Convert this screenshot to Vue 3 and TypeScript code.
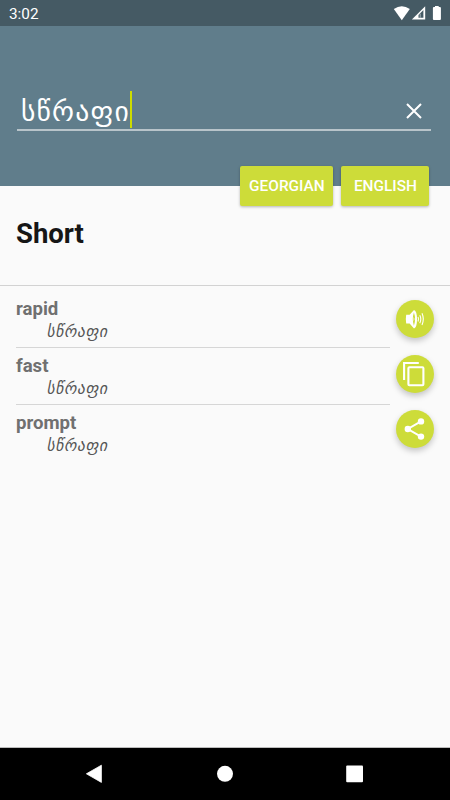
<script setup lang="ts">
import { ref } from 'vue'

interface Entry {
  word: string
  source: string
}

const query = ref('სწრაფი')
const languages: string[] = ['GEORGIAN', 'ENGLISH']
const entries: Entry[] = [
  { word: 'rapid', source: 'სწრაფი' },
  { word: 'fast', source: 'სწრაფი' },
  { word: 'prompt', source: 'სწრაფი' },
]
</script>

<template>
  <div class="screen">
    <div class="status">
      <span class="clock">3:02</span>
      <svg class="status-icons" width="50" height="18" viewBox="0 0 50 18">
        <path d="M.8 4.1Q8.8-1.4 16.8 4.1L8.8 15.3Z" fill="#fff" />
        <path d="M32.2 1.3V14.6H18.9Z" fill="#fff" />
        <path d="M25.5 9.9L30.4 5V12.8H25.5Z" fill="#455a64" />
        <path d="M27.2 8.7V12.9" stroke="#a9b4b9" stroke-width="1" />
        <path d="M42 .9h3.7v1.2h1.2q1 0 1 1v10.8q0 1-1 1h-6q-1 0-1-1v-10.8q0-1 1-1H42z" fill="#fff" />
      </svg>
    </div>

    <header class="header">
      <div class="field">
        <span class="query">{{ query }}</span>
        <span class="caret"></span>
        <svg class="clear" width="16" height="16" viewBox="0 0 16 16">
          <path d="M1 1L15 15M15 1L1 15" stroke="#fff" stroke-width="2" />
        </svg>
      </div>
    </header>

    <div class="languages">
      <button v-for="lang in languages" :key="lang" :class="['lang', lang.toLowerCase()]">{{ lang }}</button>
    </div>

    <section class="summary">
      <h1>Short</h1>
    </section>

    <main class="results">
      <ul class="entries">
        <li v-for="entry in entries" :key="entry.word">
          <div class="word">{{ entry.word }}</div>
          <div class="source">{{ entry.source }}</div>
        </li>
      </ul>
      <div class="actions">
        <button class="fab" aria-label="Listen">
          <svg width="38" height="38" viewBox="0 0 38 38">
            <path d="M10.2 14.8h3.4l4.4-4.8q3 1 3 9.2t-3 9.4l-4.4-5.2h-3.4q-.8-4.2 0-8.6z" fill="#fff" />
            <path d="M17.9 12.6q-2.2 6.6 0 13.2q2.4-6.6 0-13.2z" fill="#cddc39" />
            <path d="M17.6 16.8q1.8 2.3 0 4.8z" fill="#fff" />
            <path d="M22 17q1.1 2 0 4.4M23.8 15.2q2 3.8 0 8M26 13.2q2.6 5.7 0 11.8" fill="none" stroke="#fff" stroke-width="1.1" />
          </svg>
        </button>
        <button class="fab" aria-label="Copy">
          <svg width="38" height="38" viewBox="0 0 38 38">
            <path d="M8.1 25V8H22.8" fill="none" stroke="#fff" stroke-width="2.1" />
            <rect x="12.4" y="12.3" width="15" height="18" rx="1" fill="none" stroke="#fff" stroke-width="2.1" />
          </svg>
        </button>
        <button class="fab" aria-label="Share">
          <svg width="38" height="38" viewBox="0 0 38 38">
            <path d="M25 11.3L11.8 19L25 26.7" fill="none" stroke="#fff" stroke-width="2" />
            <circle cx="25" cy="11.4" r="3.2" fill="#fff" />
            <circle cx="11.8" cy="19" r="3.2" fill="#fff" />
            <circle cx="25" cy="26.6" r="3.2" fill="#fff" />
          </svg>
        </button>
      </div>
    </main>

    <nav class="navbar">
      <svg width="450" height="52" viewBox="0 0 450 52">
        <path d="M86.4 25.8L101.4 17.2V34.4Z" fill="#fff" stroke="#fff" stroke-width=".8" stroke-linejoin="round" />
        <circle cx="225" cy="25.8" r="8" fill="#fff" />
        <rect x="346.2" y="17.4" width="16.8" height="16.8" rx="1" fill="#fff" />
      </svg>
    </nav>
  </div>
</template>

<style>
body {
  margin: 0;
}
</style>

<style scoped>
.screen {
  width: 450px;
  height: 800px;
  display: flex;
  flex-direction: column;
  overflow: hidden;
  background: #fafafa;
  font-family: Roboto, "DejaVu Sans", sans-serif;
}
.status {
  height: 26px;
  flex: none;
  display: flex;
  justify-content: space-between;
  align-items: flex-start;
  box-sizing: border-box;
  padding: 5px 7px 0 9px;
  background: #455a64;
  color: #fff;
}
.clock {
  font-size: 15.3px;
  line-height: 18px;
}
.header {
  height: 160px;
  flex: none;
  box-sizing: border-box;
  padding: 63px 19px 0 17px;
  background: #607d8b;
}
.field {
  height: 42px;
  box-sizing: border-box;
  display: flex;
  align-items: flex-start;
  padding: 2px 9.4px 0 4px;
  border-bottom: 2px solid #b8c4ca;
}
.query {
  width: 109px;
  padding-top: 2px;
  color: #fff;
  font-size: 27.6px;
  letter-spacing: 1.2px;
  line-height: 38px;
  white-space: nowrap;
}
.caret {
  width: 2px;
  height: 37px;
  background: #cddc00;
}
.clear {
  margin: 12px 0 0 auto;
}
.languages {
  height: 40px;
  flex: none;
  display: flex;
  justify-content: flex-end;
  gap: 8px;
  margin-top: -20px;
  padding-right: 20.6px;
}
button {
  border: 0;
  padding: 0;
  background: #cddc39;
  color: #fff;
  font-family: inherit;
}
.lang {
  height: 40px;
  border-radius: 2px;
  font-size: 15.4px;
  font-weight: 500;
  box-shadow: 0 1px 3px rgba(0, 0, 0, .28);
}
.georgian {
  width: 93px;
}
.english {
  width: 88px;
}
.summary {
  height: 80px;
  flex: none;
  box-sizing: border-box;
  padding: 11px 16px 0;
  border-bottom: 1px solid #d2d2d2;
}
h1 {
  margin: 0;
  color: #161616;
  font-size: 27.5px;
  line-height: 34px;
  font-weight: 700;
}
.results {
  flex: 1;
  display: flex;
  gap: 5.6px;
  padding: 6px 0 0 16px;
}
.entries {
  width: 374px;
  margin: 0;
  padding: 0;
  list-style: none;
}
.entries li {
  height: 57px;
  box-sizing: border-box;
  padding-top: 6px;
}
.entries li:not(:last-child) {
  border-bottom: 1px solid #d6d6d6;
}
.entries li:first-child {
  height: 56px;
  padding-top: 5px;
}
.word {
  color: #707070;
  font-size: 18.6px;
  line-height: 24px;
  font-weight: 700;
}
.source {
  padding-left: 30.5px;
  color: #555;
  font-size: 15.6px;
  letter-spacing: .6px;
  line-height: 22px;
  font-style: italic;
}
.actions {
  display: flex;
  flex-direction: column;
  gap: 17px;
  padding-top: 8px;
}
.fab {
  width: 38px;
  height: 38px;
  border-radius: 50%;
  box-shadow: 0 3px 6px rgba(0, 0, 0, .22);
}
.fab svg {
  display: block;
}
.navbar {
  height: 52px;
  flex: none;
  background: #000;
  box-shadow: 0 -1px 0 #bbb;
}
</style>
